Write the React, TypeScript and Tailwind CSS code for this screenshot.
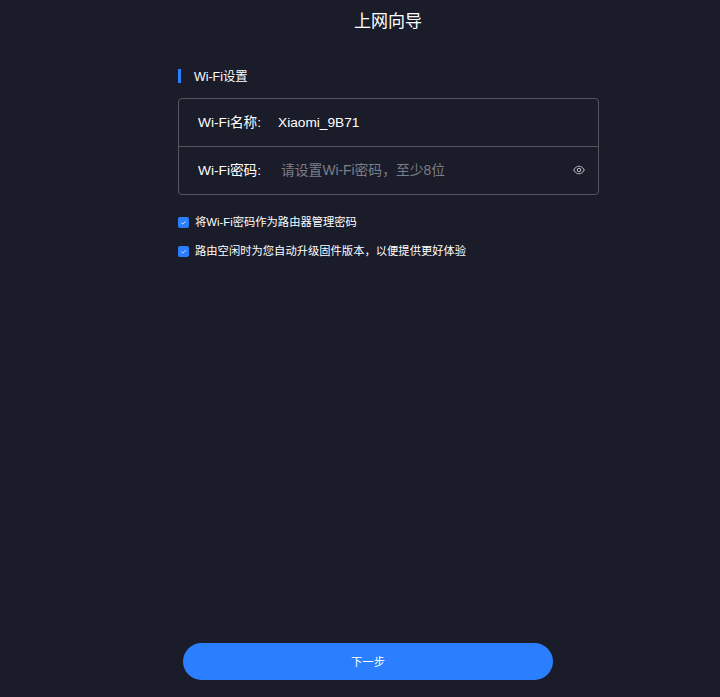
import React from "react";

function Check() {
  return (
    <span className="flex h-[11px] w-[11px] items-center justify-center rounded-[2px] bg-[#2b7fff]">
      <svg width="7" height="7" viewBox="0 0 8 8" fill="none" stroke="#dfe9ff" strokeWidth="1">
        <path d="M1.5 4.2 L3.3 5.8 L6.5 2.5" />
      </svg>
    </span>
  );
}

export default function App() {
  return (
    <div className="flex h-[697px] w-[720px] flex-col items-start overflow-hidden bg-[#1a1c29] text-white font-['Liberation_Sans','Noto_Sans_CJK_SC',sans-serif]">
      <h1 className="mt-[11px] ml-[354px] h-[22px] text-[17px] leading-[22px] font-normal">上网向导</h1>
      <div className="mt-[36px] ml-[178px] flex w-[421px] flex-col">
        <div className="flex h-[14px] items-center gap-[13px] text-[12.4px]">
          <span className="h-[14px] w-[3px] bg-[#2b7fff]" />
          <span className="mt-[1px] leading-[14px]">Wi-Fi设置</span>
        </div>
        <div className="mt-[15px] flex h-[97px] flex-col rounded-[4px] border border-[#53555f] text-[13.7px]">
          <div className="flex h-[48px] items-center border-b border-[#53555f] pl-[19px]">
            <span className="w-[80px] pt-[2px]">Wi-Fi名称:</span>
            <span className="pt-[2px]">Xiaomi_9B71</span>
          </div>
          <div className="flex flex-1 items-center pl-[19px] pr-[13px]">
            <span className="w-[83px] pt-[2px]">Wi-Fi密码:</span>
            <span className="flex-1 pt-[2px] text-[13.8px] text-[#7c7e88]">请设置Wi-Fi密码，至少8位</span>
            <svg className="mb-[1px]" width="12" height="12" viewBox="0 0 24 24" fill="none" stroke="#c5c6cb" strokeWidth="2">
              <path d="M1.5 12 C5 5.5 9 4.5 12 4.5 C15 4.5 19 5.5 22.5 12 C19 18.5 15 19.5 12 19.5 C9 19.5 5 18.5 1.5 12 Z" />
              <circle cx="12" cy="12" r="3.5" />
            </svg>
          </div>
        </div>
        <div className="mt-[19px] flex items-center gap-[6px] text-[11.3px] leading-[17px]">
          <Check />
          <span>将Wi-Fi密码作为路由器管理密码</span>
        </div>
        <div className="mt-[12px] flex items-center gap-[6px] text-[11.3px] leading-[17px]">
          <Check />
          <span>路由空闲时为您自动升级固件版本，以便提供更好体验</span>
        </div>
      </div>
      <button className="mt-auto mb-[17px] ml-[183px] h-[37px] w-[370px] rounded-full bg-[#2b7fff] pt-[2px] text-[11.3px] text-white">下一步</button>
    </div>
  );
}
